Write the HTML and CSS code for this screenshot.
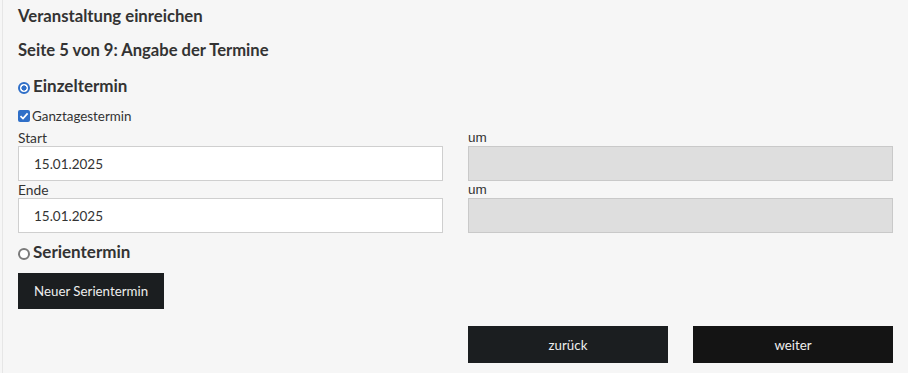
FILE: index.html
```html
<!DOCTYPE html>
<html lang="de">
<head>
    <meta charset="UTF-8">
    <meta name="viewport" content="width=device-width, initial-scale=1.0">
    <title>Veranstaltung einreichen</title>
    <link rel="stylesheet" href="styles.css">
</head>
<body>
    <div class="panel">
        <h1 class="title">Veranstaltung einreichen</h1>
        <h2 class="page-title">Seite 5 von 9: Angabe der Termine</h2>

        <label class="option">
            <span class="radio checked"></span>Einzeltermin
        </label>

        <label class="check">
            <span class="box">
                <svg width="10" height="10" viewBox="0 0 10 10"><path d="M1.5 5.2 L4 7.6 L8.6 2.4" fill="none" stroke="#fff" stroke-width="1.7"/></svg>
            </span>Ganztagestermin
        </label>

        <div class="row">
            <div class="field">
                <div class="label">Start</div>
                <input class="input" type="text" value="15.01.2025">
            </div>
            <div class="field">
                <div class="label alt">um</div>
                <input class="input" type="text" disabled>
            </div>
        </div>
        <div class="row">
            <div class="field">
                <div class="label">Ende</div>
                <input class="input" type="text" value="15.01.2025">
            </div>
            <div class="field">
                <div class="label alt">um</div>
                <input class="input" type="text" disabled>
            </div>
        </div>

        <label class="option serie">
            <span class="radio"></span>Serientermin
        </label>

        <button class="btn new-serie">Neuer Serientermin</button>

        <div class="nav">
            <button class="btn nav-btn back">zurück</button>
            <button class="btn nav-btn next">weiter</button>
        </div>
    </div>
</body>
</html>
```

FILE: styles.css
```css
body {
    margin: 0;
    background: #f6f6f6;
    font-family: Lato, 'Open Sans', sans-serif;
    color: #333;
}
.panel {
    height: 373px;
    box-sizing: border-box;
    padding: 5px 15px 0 15px;
    border-left: 1px solid #e6e6e6;
    margin-left: 2px;
}
.title {
    font-size: 16.7px;
    font-weight: bold;
    margin: 0;
    line-height: 22px;
}
.page-title {
    font-size: 16.6px;
    font-weight: bold;
    margin: 12px 0 0;
    line-height: 22px;
}
.option {
    display: flex;
    align-items: center;
    font-size: 17px;
    font-weight: bold;
    margin-top: 14px;
    line-height: 22px;
}
.radio {
    flex-shrink: 0;
    width: 8px;
    height: 8px;
    border: 2px solid #7a7a7a;
    border-radius: 50%;
    margin: 3px 3px 0 0;
    background: #fff;
    box-sizing: content-box;
}
.radio.checked {
    border-color: #2f6fc8;
    background: radial-gradient(circle, #2f6fc8 0 2.3px, #fff 2.9px);
}
.check {
    display: flex;
    align-items: center;
    font-size: 13.4px;
    margin: 11px 0 5px;
    line-height: 16px;
}
.box {
    flex-shrink: 0;
    width: 12px;
    height: 12px;
    border-radius: 2px;
    background: #2f6fc8;
    margin: 0 2px 0 0;
    display: flex;
    align-items: center;
    justify-content: center;
}
.row {
    display: grid;
    grid-template-columns: 1fr 1fr;
    gap: 25px;
}
.label {
    font-size: 13.8px;
    line-height: 17px;
}
.label.alt {
    font-family: 'Liberation Sans', Arial, sans-serif;
    font-size: 13.5px;
}
.input {
    display: block;
    width: 100%;
    box-sizing: border-box;
    height: 35px;
    border: 1px solid #cfcfcf;
    background: #fff;
    padding: 0 15px;
    font-family: Lato, sans-serif;
    font-size: 13.5px;
    color: #333;
    margin: 0;
}
.input:disabled {
    background: #dedede;
    border-color: #c9c9c9;
}
.serie {
    margin-top: 8px;
}
.btn {
    border: none;
    background: #1b1e20;
    color: #eee;
    font-family: Lato, sans-serif;
    font-size: 13.3px;
    cursor: pointer;
}
.new-serie {
    display: block;
    margin-top: 10px;
    padding: 0 16px;
    height: 36px;
}
.nav {
    display: grid;
    grid-template-columns: 200px 200px;
    gap: 25px;
    justify-content: end;
    margin-top: 17px;
}
.nav-btn {
    height: 37px;
}
.next {
    background: #141414;
}
```
